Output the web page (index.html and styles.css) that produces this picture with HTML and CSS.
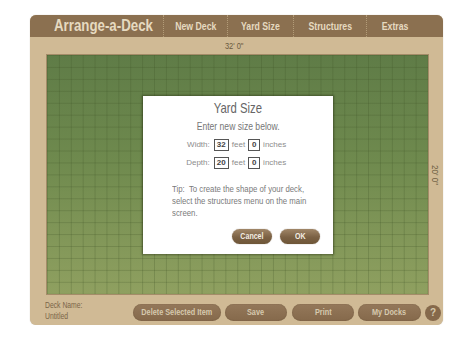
FILE: index.html
```html
<!DOCTYPE html>
<html>
<head>
<meta charset="utf-8">
<link rel="stylesheet" href="styles.css">
</head>
<body>
<div class="app">
  <div class="header">
    <div class="title"><span class="sx sx-left">Arrange-a-Deck</span></div>
    <div class="nav nav-new"><span class="sx">New Deck</span></div>
    <div class="nav nav-yard"><span class="sx">Yard Size</span></div>
    <div class="nav nav-struct"><span class="sx">Structures</span></div>
    <div class="nav nav-extras"><span class="sx">Extras</span></div>
  </div>
  <div class="ruler-top"><span class="sx">32' 0"</span></div>
  <div class="middle">
    <div class="band-left"></div>
    <div class="grid">
      <div class="dialog">
        <div class="dlg-title"><span class="sx sx-title">Yard Size</span></div>
        <div class="dlg-sub"><span class="sx sx-sub">Enter new size below.</span></div>
        <div class="dim-row">
          <span class="dim-label">Width:</span>
          <span class="box box-ft">32</span>
          <span class="unit">feet</span>
          <span class="box box-in">0</span>
          <span class="unit">inches</span>
        </div>
        <div class="dim-row">
          <span class="dim-label">Depth:</span>
          <span class="box box-ft">20</span>
          <span class="unit">feet</span>
          <span class="box box-in">0</span>
          <span class="unit">inches</span>
        </div>
        <p class="tip">Tip:&nbsp; To create the shape of your deck,<br>select the structures menu on the main<br>screen.</p>
        <div class="dlg-actions">
          <span class="dbtn"><span class="sx">Cancel</span></span>
          <span class="dbtn"><span class="sx">OK</span></span>
        </div>
      </div>
    </div>
    <div class="band-right"><span class="ruler-side">20' 0"</span></div>
  </div>
  <div class="footer">
    <div class="deck-name">
      <div class="sx-left-block">Deck Name:</div>
      <div class="sx-left-block">Untitled</div>
    </div>
    <div class="actions">
      <span class="btn btn-delete"><span class="sx">Delete Selected Item</span></span>
      <span class="btn btn-save"><span class="sx">Save</span></span>
      <span class="btn btn-print"><span class="sx">Print</span></span>
      <span class="btn btn-docks"><span class="sx">My Docks</span></span>
      <span class="help">?</span>
    </div>
  </div>
</div>
</body>
</html>
```

FILE: styles.css
```css
html, body {
  margin: 0;
  padding: 0;
  background: #ffffff;
}
body {
  font-family: "Liberation Sans", Arial, sans-serif;
}
.sx {
  display: inline-block;
  white-space: nowrap;
  transform: scaleX(0.83);
  transform-origin: center center;
}
.sx-left {
  transform-origin: left center;
}
.app {
  margin: 15px 0 0 30px;
  width: 413px;
  height: 310px;
  background: #d0ba95;
  border-radius: 6px;
  display: flex;
  flex-direction: column;
  overflow: hidden;
  box-shadow: 0 0 1px rgba(120, 100, 70, 0.5);
}
.header {
  height: 22px;
  flex: none;
  background: #8b7050;
  display: flex;
  align-items: center;
  color: #e6dac0;
  font-weight: bold;
}
.title {
  width: 134px;
  box-sizing: border-box;
  padding-left: 24px;
  font-size: 16px;
  height: 22px;
  line-height: 22px;
  white-space: nowrap;
  border-right: 1px dotted #b39c78;
}
.nav {
  font-size: 10.5px;
  height: 22px;
  line-height: 22px;
  text-align: center;
  box-sizing: border-box;
  border-right: 1px dotted #b39c78;
}
.nav-new { width: 64px; }
.nav-yard { width: 66px; }
.nav-struct { width: 73px; }
.nav-extras { width: 57px; border-right: none; }
.ruler-top {
  height: 18px;
  flex: none;
  line-height: 18px;
  text-align: center;
  font-size: 9px;
  color: #6a5a40;
  padding-right: 4px;
}
.middle {
  height: 239px;
  flex: none;
  display: flex;
}
.band-left {
  width: 17px;
  flex: none;
}
.grid {
  position: relative;
  width: 381px;
  height: 239px;
  flex: none;
  box-shadow: 0 0 0 1px rgba(110, 85, 50, 0.45);
  background-color: #718b4f;
  background-image:
    linear-gradient(to right, rgba(60, 80, 35, 0.24) 1px, transparent 1px),
    linear-gradient(to bottom, rgba(60, 80, 35, 0.24) 1px, transparent 1px),
    linear-gradient(to bottom, #5f7c47 0%, #6f8a4e 45%, #8fa060 100%);
  background-size: 11.9px 11.95px, 11.9px 11.95px, 100% 100%;
}
.band-right {
  width: 15px;
  flex: none;
  display: flex;
  align-items: center;
  justify-content: center;
}
.ruler-side {
  display: block;
  transform: rotate(90deg) scaleX(0.9);
  white-space: nowrap;
  font-size: 9px;
  color: #6a5a40;
}
.dialog {
  position: absolute;
  left: 96px;
  top: 41px;
  width: 190px;
  height: 158px;
  box-sizing: border-box;
  background: #ffffff;
  box-shadow: 0 0 2px 1px rgba(40, 50, 20, 0.55);
  padding: 4px 13px 0 13px;
  color: #6f6f6f;
  display: flex;
  flex-direction: column;
}
.dlg-title {
  text-align: center;
  font-size: 14.5px;
  line-height: 17px;
  color: #666666;
}
.sx-title {
  transform: scaleX(0.78);
}
.dlg-sub {
  text-align: center;
  font-size: 11px;
  line-height: 13px;
  margin-top: 3px;
  color: #767676;
}
.sx-sub {
  transform: scaleX(0.78);
}
.dim-row {
  display: flex;
  justify-content: center;
  align-items: center;
  font-size: 8px;
  height: 13px;
  margin-top: 5px;
  color: #8c8c8c;
  padding-right: 4px;
}
.dim-row + .dim-row {
  margin-top: 5px;
}
.dim-label {
  width: 27px;
  text-align: right;
  margin-right: 4px;
}
.box {
  height: 10px;
  border: 1.5px solid #555;
  color: #444;
  font-size: 8px;
  line-height: 10px;
  text-align: center;
  font-weight: bold;
}
.box-ft { width: 13px; margin-right: 3px; }
.box-in { width: 10px; margin-right: 3px; }
.unit {
  margin-right: 3px;
}
.tip {
  margin: 14px 0 0 16px;
  font-size: 9.5px;
  line-height: 12px;
  color: #7a7a7a;
  white-space: nowrap;
  transform: scaleX(0.82);
  transform-origin: left top;
}
.dlg-actions {
  margin-top: 10px;
  display: flex;
  justify-content: flex-end;
  gap: 8px;
}
.dbtn {
  width: 40px;
  height: 15px;
  line-height: 15px;
  border-radius: 8px;
  text-align: center;
  font-size: 8.5px;
  font-weight: bold;
  color: #f4eee4;
  background: linear-gradient(to bottom, #a08668 0%, #7b6144 55%, #6e5638 100%);
  box-shadow: 0 0 1px rgba(60, 40, 20, 0.6);
}
.footer {
  height: 31px;
  flex: none;
  display: flex;
  align-items: flex-start;
}
.deck-name {
  width: 103px;
  flex: none;
  box-sizing: border-box;
  padding: 6px 0 0 15px;
  font-size: 8.5px;
  line-height: 11px;
  color: #7a6548;
}
.sx-left-block {
  white-space: nowrap;
  transform: scaleX(0.8);
  transform-origin: left center;
}
.actions {
  display: flex;
  align-items: center;
  padding-top: 10px;
}
.btn {
  height: 17px;
  line-height: 17px;
  border-radius: 9px;
  text-align: center;
  font-size: 9px;
  font-weight: bold;
  color: #d6c9ae;
  background: linear-gradient(to bottom, #94785a 0%, #85694b 100%);
  box-shadow: inset 0 0 1px rgba(60, 40, 20, 0.5);
}
.btn .sx { transform: scaleX(0.81); }
.btn-delete { width: 88px; }
.btn-save { width: 62px; margin-left: 4px; }
.btn-print { width: 62px; margin-left: 5px; }
.btn-docks { width: 63px; margin-left: 4px; }
.help {
  width: 16px;
  height: 16px;
  margin-left: 4px;
  border-radius: 50%;
  background: #85694b;
  color: #d6c9ae;
  font-size: 10px;
  font-weight: bold;
  line-height: 16px;
  text-align: center;
}
```
